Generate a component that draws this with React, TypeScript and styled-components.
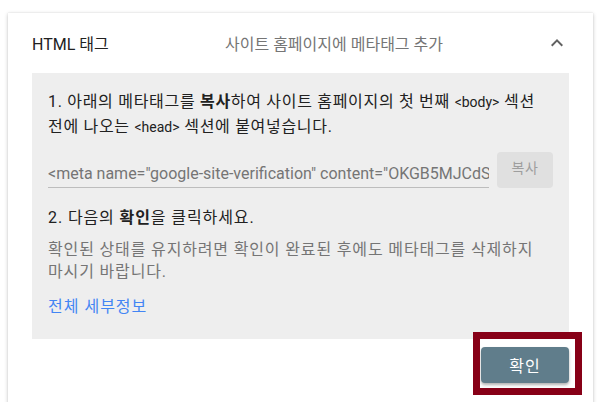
import React from "react";
import styled, { createGlobalStyle } from "styled-components";

const Global = createGlobalStyle`
  html, body { margin: 0; padding: 0; background: #ffffff; }
  body { font-family: Roboto, "Noto Sans CJK KR", "Noto Sans", sans-serif; }
  * { box-sizing: border-box; }
`;

const Page = styled.div`
  padding: 13px 4px 0 8px;
  height: 402px;
  overflow: hidden;
`;

const Card = styled.section`
  background: #fff;
  box-shadow: 0 1px 4px rgba(0, 0, 0, 0.22), 0 0 1px rgba(0, 0, 0, 0.12);
  padding: 0 24px 40px 24px;
`;

const Header = styled.div`
  display: grid;
  grid-template-columns: 193px 1fr auto;
  align-items: center;
  height: 60px;
`;

const Title = styled.div`
  font-size: 16px;
  color: #212121;
`;

const Subtitle = styled.div`
  font-size: 16px;
  color: #757575;
`;

const Chevron = styled.svg`
  width: 24px;
  height: 24px;
  fill: #616161;
`;

const Panel = styled.div`
  background: #eeeeee;
  padding: 16px 16px 21px 16px;
`;

const Step = styled.p<{ $gap?: number; $spacing?: number }>`
  margin: 0;
  margin-top: ${(p) => p.$gap ?? 0}px;
  font-size: 16px;
  line-height: 25px;
  letter-spacing: ${(p) => p.$spacing ?? 0.7}px;
  color: #212121;
  b { font-weight: 700; line-height: 1; }
`;

const Code = styled.span`
  font-size: 14px;
  line-height: 1;
  letter-spacing: 0;
`;

const Note = styled.p`
  margin: 9px 0 0 0;
  font-size: 16px;
  line-height: 22px;
  letter-spacing: 0.85px;
  color: #757575;
`;

const CopyRow = styled.div`
  display: flex;
  align-items: stretch;
  gap: 8px;
  margin-top: 13px;
`;

const MetaField = styled.div`
  flex: 1;
  min-width: 0;
  border-bottom: 1px solid #bdbdbd;
  font-size: 16px;
  color: #757575;
  white-space: nowrap;
  overflow: hidden;
  padding-top: 11px;
  line-height: 22px;
`;

const CopyButton = styled.button`
  width: 56px;
  height: 36px;
  border: none;
  border-radius: 4px;
  background: #e0e0e0;
  color: #9e9e9e;
  font-family: inherit;
  font-size: 14px;
  letter-spacing: 0.5px;
  padding: 0 0 6px 0;
`;

const Link = styled.a`
  display: inline-block;
  margin-top: 13px;
  font-size: 16px;
  line-height: 22px;
  letter-spacing: 1px;
  color: #4285f4;
  text-decoration: none;
`;

const Actions = styled.div`
  display: flex;
  justify-content: flex-end;
  padding-top: 8px;
`;

const ConfirmWrap = styled.div`
  position: relative;
`;

const ConfirmButton = styled.button`
  width: 88px;
  height: 36px;
  border: none;
  border-radius: 4px;
  background: #607d8b;
  color: #ffffff;
  font-family: inherit;
  font-size: 16px;
  letter-spacing: 1px;
  box-shadow: 0 2px 3px rgba(0, 0, 0, 0.3);
`;

const Highlight = styled.div`
  position: absolute;
  left: -8px;
  top: -15px;
  right: -13px;
  bottom: -12px;
  border: 7px solid #870017;
  pointer-events: none;
`;

export default function App() {
  return (
    <Page>
      <Global />
      <Card>
        <Header>
          <Title>HTML 태그</Title>
          <Subtitle>사이트 홈페이지에 메타태그 추가</Subtitle>
          <Chevron viewBox="0 0 24 24">
            <path d="M12 8l-6 6 1.41 1.41L12 10.83l4.59 4.58L18 14z" />
          </Chevron>
        </Header>
        <Panel>
          <Step>
            1. 아래의 메타태그를 <b>복사</b>하여 사이트 홈페이지의 첫 번째{" "}
            <Code>&lt;body&gt;</Code> 섹션 전에 나오는 <Code>&lt;head&gt;</Code>{" "}
            섹션에 붙여넣습니다.
          </Step>
          <CopyRow>
            <MetaField>
              &lt;meta name="google-site-verification" content="OKGB5MJCdSxYz1Q" /&gt;
            </MetaField>
            <CopyButton>복사</CopyButton>
          </CopyRow>
          <Step $gap={17} $spacing={0.9}>
            2. 다음의 <b>확인</b>을 클릭하세요.
          </Step>
          <Note>
            확인된 상태를 유지하려면 확인이 완료된 후에도 메타태그를 삭제하지
            마시기 바랍니다.
          </Note>
          <Link href="#">전체 세부정보</Link>
        </Panel>
        <Actions>
          <ConfirmWrap>
            <ConfirmButton>확인</ConfirmButton>
            <Highlight />
          </ConfirmWrap>
        </Actions>
      </Card>
    </Page>
  );
}
